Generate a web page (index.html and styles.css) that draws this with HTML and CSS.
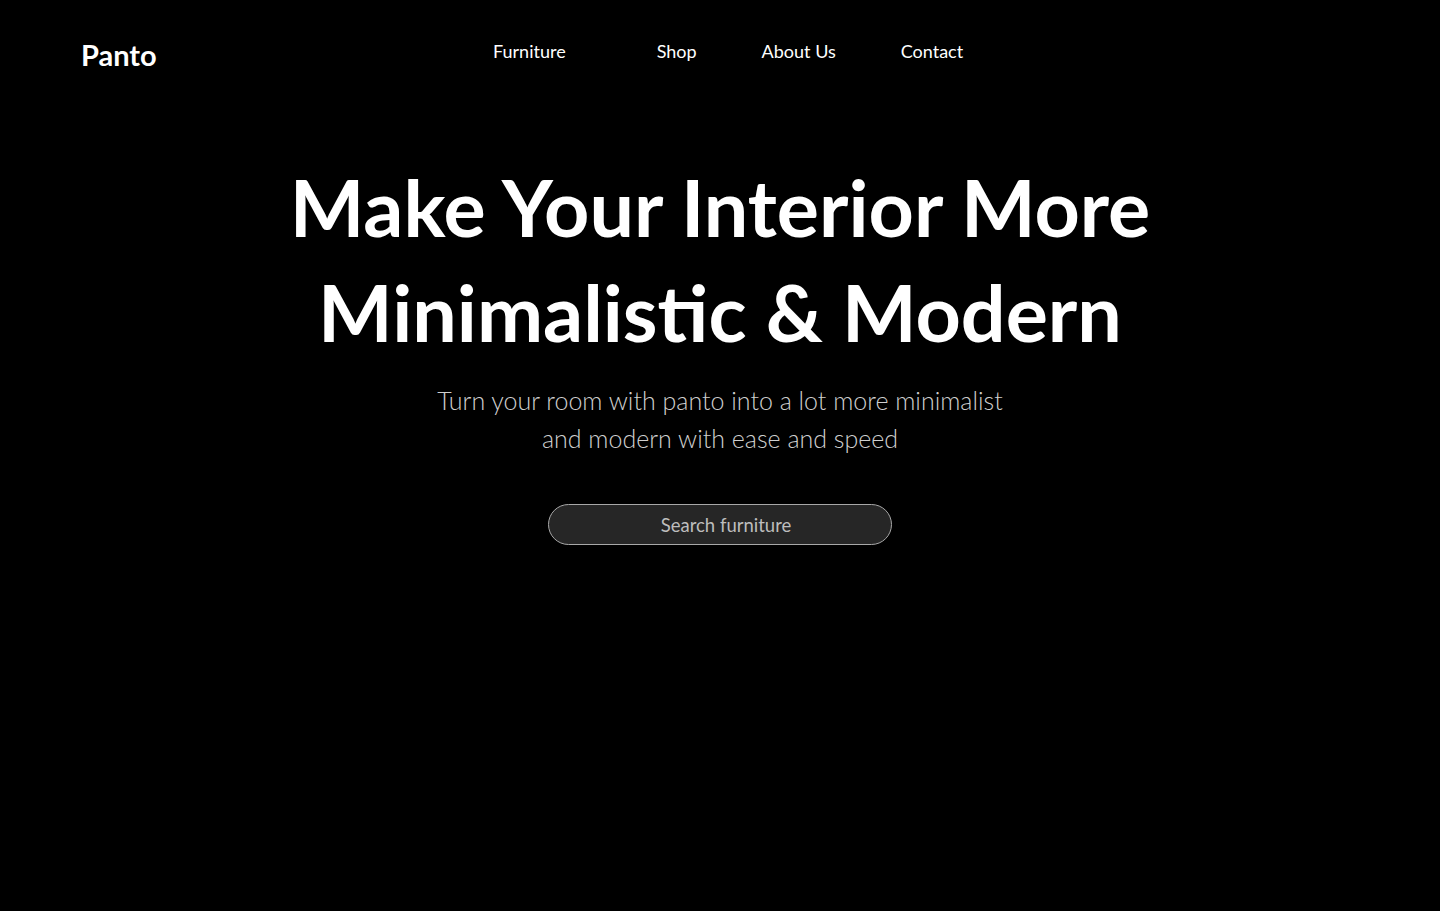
FILE: index.html
```html
<!DOCTYPE html>
<html lang="en">
<head>
<meta charset="utf-8">
<title>Panto</title>
<link rel="stylesheet" href="styles.css">
</head>
<body>
<header class="header">
  <a class="logo" href="#">Panto</a>
  <nav class="nav">
    <a class="nav-link nav-link--dropdown" href="#">Furniture</a>
    <a class="nav-link" href="#">Shop</a>
    <a class="nav-link" href="#">About Us</a>
    <a class="nav-link" href="#">Contact</a>
  </nav>
</header>
<main class="hero">
  <h1 class="hero-title">Make Your Interior More<br>Minimalistic &amp; Modern</h1>
  <p class="hero-text">Turn your room with panto into a lot more minimalist<br>and modern with ease and speed</p>
  <form class="search">
    <input class="search-input" type="text" placeholder="Search furniture">
  </form>
</main>
</body>
</html>
```
FILE: styles.css
```css
* { box-sizing: border-box; }
html, body {
  margin: 0;
  background: #000;
  color: #fff;
  font-family: "Lato", "Noto Sans", sans-serif;
}
a { color: inherit; text-decoration: none; }

.header {
  display: flex;
  align-items: center;
  height: 106px;
  padding: 0 0 4px 81px;
}
.logo {
  font-size: 29px;
  font-weight: 700;
  width: 412px;
  margin-top: 6px;
}
.nav {
  display: flex;
  align-items: center;
  gap: 65px;
}
.nav-link {
  font-size: 18px;
}
.nav-link--dropdown { margin-right: 26px; }

.hero {
  display: flex;
  flex-direction: column;
  align-items: center;
  text-align: center;
}
.hero-title {
  margin: 48px 0 0;
  font-size: 79px;
  line-height: 105px;
  font-weight: 700;
}
.hero-text {
  margin: 17px 0 0;
  font-size: 25px;
  line-height: 38px;
  color: #cfcfcf;
  font-weight: 300;
}
.search {
  margin-top: 47px;
}
.search-input {
  width: 344px;
  height: 41px;
  border-radius: 21px;
  border: 1px solid #a8a8a8;
  background: #262626;
  color: #ddd;
  font-family: inherit;
  font-size: 18.5px;
  font-weight: 400;
  text-align: center;
  padding: 0 0 0 12px;
  outline: none;
}
.search-input::placeholder { color: #bdbdbd; }
```
